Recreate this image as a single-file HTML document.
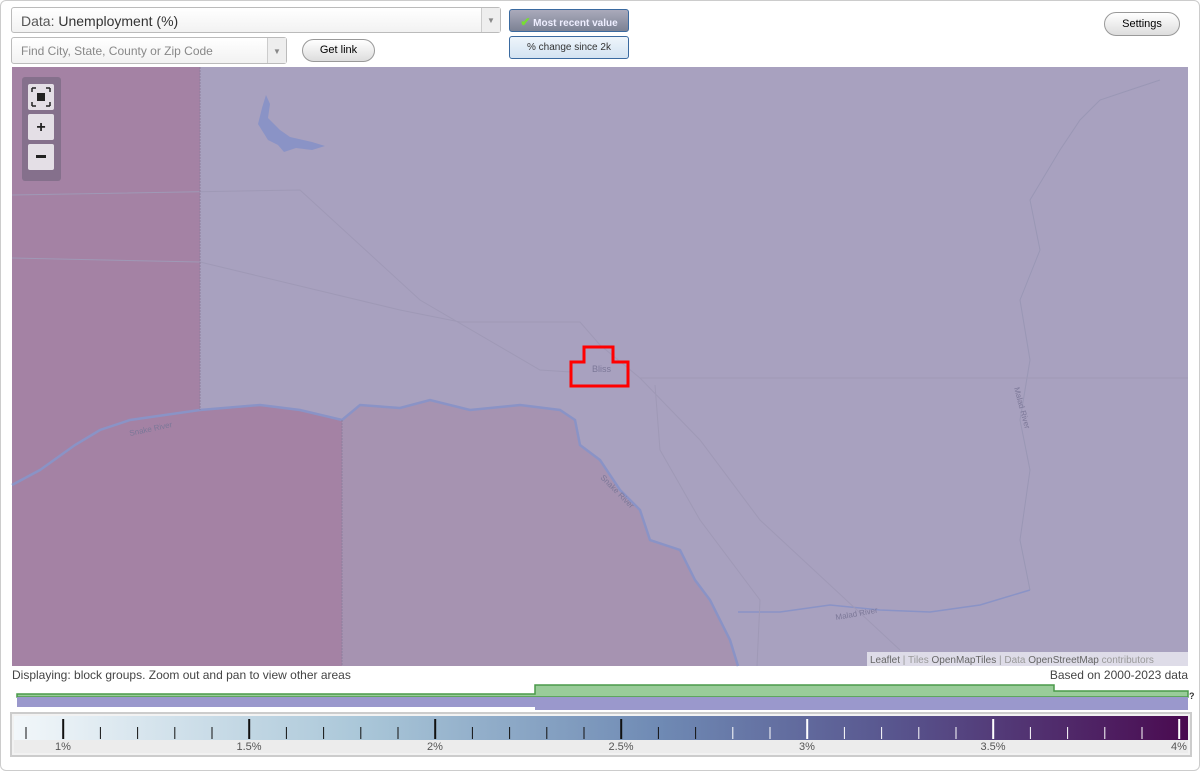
<!DOCTYPE html><html><head><style>
body{margin:0;width:1200px;height:771px;background:#fff;font-family:"Liberation Sans",sans-serif;position:relative;overflow:hidden}
.frame{position:absolute;left:0;top:0;width:1198px;height:769px;border:1px solid #ccc;border-radius:6px}
.sel{position:absolute;border:1px solid #bbb;border-radius:3px;background:linear-gradient(#fff,#f2f2f2);box-sizing:border-box}
.arr{position:absolute;right:0;top:0;bottom:0;width:18px;border-left:1px solid #ccc;background:#eee;color:#888;font-size:8px;text-align:center}
.btn{position:absolute;border:1px solid #999;border-radius:12px;background:linear-gradient(#fff,#ddd);font-size:11px;text-align:center;box-sizing:border-box}
.tog{position:absolute;border:1px solid #3a6aa0;border-radius:3px;font-size:10px;text-align:center;box-sizing:border-box}
</style></head><body>
<div class="frame"></div>
<div class="sel" style="left:11px;top:7px;width:490px;height:26px;font-size:14px;padding:5px 9px;color:#555">Data: <span style="color:#333">Unemployment (%)</span><div class="arr" style="padding-top:8px">▼</div></div>
<div class="sel" style="left:11px;top:37px;width:276px;height:27px;font-size:12px;padding:6px 9px;color:#888">Find City, State, County or Zip Code<div class="arr" style="padding-top:9px">▼</div></div>
<div class="btn" style="left:302px;top:39px;width:73px;height:23px;padding-top:4px">Get link</div>
<div class="tog" style="left:509px;top:9px;width:120px;height:23px;background:linear-gradient(#aab,#7c8294);color:#eef;font-weight:bold;padding-top:5px"><span style="color:#7d3;font-size:12px">✔</span> Most recent value</div>
<div class="tog" style="left:509px;top:36px;width:120px;height:23px;background:linear-gradient(#eef5fb,#d3e3f2);color:#333;padding-top:5px">% change since 2k</div>
<div class="btn" style="left:1104px;top:12px;width:76px;height:24px;padding-top:5px">Settings</div>
<svg style="position:absolute;left:0;top:0" width="1200" height="771">
<rect x="12" y="67" width="1176" height="599" fill="#a8a1bf"/>
<path d="M12,67H200V410L260,405 300,410 342,420V666H12Z" fill="#a482a4"/>
<path d="M342,420L360,405 400,408 430,400 470,410 520,405 560,410 575,420 580,445 600,460 620,490 640,510 650,540 680,550 695,580 710,600 730,640 738,666H342Z" fill="#a693b1"/>
<path d="M12,485L40,470 75,445 100,430 130,420 200,410 260,405 300,410 342,420 360,405 400,408 430,400 470,410 520,405 560,410 575,420 580,445 600,460 620,490 640,510 650,540 680,550 695,580 710,600 730,640 738,666" fill="none" stroke="#8a93c6" stroke-width="2.5"/>
<path d="M738,612L780,612 830,605 880,610 930,612 980,605 1030,590" fill="none" stroke="#8a93c6" stroke-width="1.5"/>
<path d="M1030,590L1020,540 1030,470 1020,420 1030,360 1020,300 1040,250 1030,200 1060,150 1080,120 1100,100 1130,90 1160,80" fill="none" stroke="#9a97b5" stroke-width="1"/>
<path d="M266,95L270,104 268,118 280,130 290,137 312,142 325,146 312,150 296,148 284,152 278,145 268,140 258,124 262,108Z" fill="#8a93c6"/>
<path d="M12,258L200,262 400,310 460,322 580,322 600,345 640,378 700,440 760,520 900,650M640,378H1188M12,195L300,190 420,300 540,370 571,372M655,385L660,450 700,520 760,600 757,666" fill="none" stroke="#9f99b6" stroke-width="1"/>
<path d="M200,67V410M342,420V666" stroke="#8e7f9e" stroke-width="1" stroke-dasharray="2 1"/>
<path d="M571,362H584V347H613V362H628V386H571Z" fill="none" stroke="#f00" stroke-width="3"/>
<text x="592" y="372" font-size="9" fill="#7c7898" font-family="Liberation Sans">Bliss</text>
<text x="130" y="436" font-size="8" fill="#7c7898" font-family="Liberation Sans" transform="rotate(-12 130 436)">Snake River</text>
<text x="600" y="478" font-size="8" fill="#7c7898" font-family="Liberation Sans" transform="rotate(45 600 478)">Snake River</text>
<text x="836" y="620" font-size="8" fill="#7c7898" font-family="Liberation Sans" transform="rotate(-10 836 620)">Malad River</text>
<text x="1014" y="388" font-size="8" fill="#7c7898" font-family="Liberation Sans" transform="rotate(75 1014 388)">Malad River</text>
<rect x="22" y="77" width="39" height="104" rx="3" fill="#7d6b86" opacity=".8"/>
<rect x="28" y="84" width="26" height="26" rx="2" fill="#e4dfe6"/><rect x="37" y="93" width="8" height="8" fill="#222"/>
<path d="M32,88h4M32,88v4M50,88h-4M50,88v4M32,106h4M32,106v-4M50,106h-4M50,106v-4" stroke="#222" stroke-width="1.5"/>
<rect x="28" y="114" width="26" height="26" rx="2" fill="#e4dfe6"/><text x="41" y="132" font-size="16" font-weight="bold" text-anchor="middle" fill="#222">+</text>
<rect x="28" y="144" width="26" height="26" rx="2" fill="#e4dfe6"/><rect x="36" y="155" width="10" height="3" fill="#222"/>
<rect x="867" y="652" width="321" height="14" fill="#e8e6ee" opacity=".85"/>
<text x="870" y="663" font-size="10" fill="#999" font-family="Liberation Sans"><tspan fill="#666">Leaflet</tspan> | Tiles <tspan fill="#666">OpenMapTiles</tspan> | Data <tspan fill="#666">OpenStreetMap</tspan> contributors</text>
<path d="M17,694H535V685H1054V691H1188V697H17Z" fill="#99cc99" stroke="#4a9a4a" stroke-width="1.5"/>
<rect x="17" y="697" width="1171" height="10" fill="#9a98cc"/><rect x="535" y="697" width="653" height="13" fill="#9a98cc"/>
<text x="1189" y="699" font-size="9" font-weight="bold" fill="#333">?</text>
<defs><linearGradient id="g"><stop offset="0" stop-color="#f2f7fa"/><stop offset=".3" stop-color="#a9c6d8"/><stop offset=".55" stop-color="#6f8ab4"/><stop offset=".75" stop-color="#58558e"/><stop offset="1" stop-color="#4a0a50"/></linearGradient></defs>
<rect x="11" y="713" width="1180" height="43" fill="#f2f2f2" stroke="#ccc" stroke-width="2"/>
<rect x="14" y="716" width="1174" height="24" fill="url(#g)"/>
<rect x="14" y="740" width="1174" height="13" fill="#ececec"/>
<g id="t"></g>
</svg>
<div id="lbl"></div>
<script>
var g=document.getElementById('t'),h='';
for(var i=0;i<=31;i++){var x=26+i*37.2;var maj=(i%5==1);var c=x<700?'#111':'#fff';
h+='<rect x="'+(x-(maj?1:0.5)).toFixed(1)+'" y="'+(maj?719:727)+'" width="'+(maj?2:1)+'" height="'+(maj?20:12)+'" fill="'+c+'"/>';}
g.innerHTML=h;
var L=['1%','1.5%','2%','2.5%','3%','3.5%','4%'],s='';
for(var j=0;j<7;j++){var x=63+j*186;s+='<div style="position:absolute;top:741px;left:'+(x-20)+'px;width:40px;text-align:center;font-size:11px;color:#555">'+L[j]+'</div>';}
document.getElementById('lbl').innerHTML=s;
</script>
<div style="position:absolute;left:12px;top:668px;font-size:12px;color:#444">Displaying: block groups. Zoom out and pan to view other areas</div>
<div style="position:absolute;right:12px;top:668px;font-size:12px;color:#444">Based on 2000-2023 data</div>
</body></html>
